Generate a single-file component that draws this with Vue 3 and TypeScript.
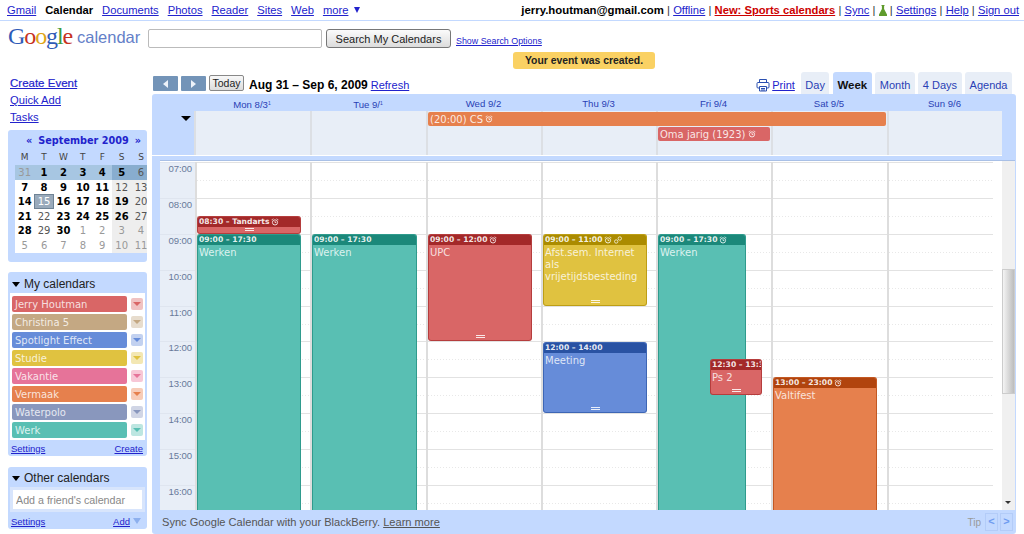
<script setup lang="ts">
interface CalEvent {
  day: number
  start: number
  end: number
  time: string
  title: string
  color: string
  head: string
  left?: number
  width: number
  alarm?: boolean
  repeat?: boolean
  grip?: boolean
}

const HOUR = 35.9
const topNav = ['Gmail', 'Calendar', 'Documents', 'Photos', 'Reader', 'Sites', 'Web']
const views = ['Day', 'Week', 'Month', '4 Days', 'Agenda']
const hours = ['07:00', '08:00', '09:00', '10:00', '11:00', '12:00', '13:00', '14:00', '15:00', '16:00']

const dayHeads = [
  { name: 'Mon 8/3', tail: '1' },
  { name: 'Tue 9/', tail: '1' },
  { name: 'Wed 9/2', tail: '' },
  { name: 'Thu 9/3', tail: '' },
  { name: 'Fri 9/4', tail: '' },
  { name: 'Sat 9/5', tail: '' },
  { name: 'Sun 9/6', tail: '' },
]

const miniWeekdays = ['M', 'T', 'W', 'T', 'F', 'S', 'S']
// each cell is "number:kind"
const miniDays = [
  ['31:o', '1:b', '2:b', '3:b', '4:b', '5:b', '6:'],
  ['7:b', '8:b', '9:b', '10:b', '11:b', '12:', '13:'],
  ['14:b', '15:t', '16:b', '17:b', '18:b', '19:b', '20:'],
  ['21:b', '22:', '23:b', '24:b', '25:b', '26:b', '27:'],
  ['28:b', '29:', '30:b', '1:o', '2:o', '3:o', '4:o'],
  ['5:o', '6:o', '7:o', '8:o', '9:o', '10:o', '11:o'],
].map((week, row) =>
  week.map((cell, col) => {
    const [n, kind] = cell.split(':')
    return { n, kind, row, weekend: col > 4 }
  })
)

const myCalendars = [
  { name: 'Jerry Houtman', color: '#d96666', soft: '#f0c2c2' },
  { name: 'Christina 5', color: '#c4a883', soft: '#e7dccd' },
  { name: 'Spotlight Effect', color: '#668cd9', soft: '#c2d1f0' },
  { name: 'Studie', color: '#e0c240', soft: '#f3e7b3' },
  { name: 'Vakantie', color: '#e67399', soft: '#f7c7d6' },
  { name: 'Vermaak', color: '#e6804d', soft: '#f7ccb8' },
  { name: 'Waterpolo', color: '#8997bd', soft: '#d0d5e5' },
  { name: 'Werk', color: '#59bfb3', soft: '#bde6e1' },
]

const events: CalEvent[] = [
  { day: 0, start: 8.5, end: 9, time: '08:30 – Tandarts', title: '', color: '#d96666', head: '#a32929', width: 104, alarm: true, grip: true },
  { day: 0, start: 9, end: 17.5, time: '09:00 – 17:30', title: 'Werken', color: '#59bfb3', head: '#1b887a', width: 104 },
  { day: 1, start: 9, end: 17.5, time: '09:00 – 17:30', title: 'Werken', color: '#59bfb3', head: '#1b887a', width: 105 },
  { day: 2, start: 9, end: 12, time: '09:00 – 12:00', title: 'UPC', color: '#d96666', head: '#a32929', width: 104, alarm: true, grip: true },
  { day: 3, start: 9, end: 11, time: '09:00 – 11:00', title: 'Afst.sem. Internet als vrijetijdsbesteding', color: '#e0c240', head: '#ab8b00', width: 104, alarm: true, repeat: true, grip: true },
  { day: 3, start: 12, end: 14, time: '12:00 – 14:00', title: 'Meeting', color: '#668cd9', head: '#2952a3', width: 104, grip: true },
  { day: 4, start: 9, end: 17.5, time: '09:00 – 17:30', title: 'Werken', color: '#59bfb3', head: '#1b887a', width: 88, alarm: true },
  { day: 4, start: 12.5, end: 13.5, time: '12:30 – 13:30', title: 'Ps 2', color: '#d96666', head: '#a32929', left: 52, width: 52, grip: true },
  { day: 5, start: 13, end: 23, time: '13:00 – 23:00', title: 'Valtifest', color: '#e6804d', head: '#b1440e', width: 104, alarm: true },
]

function eventsFor(day: number) {
  return events.filter((e) => e.day === day)
}

function eventStyle(e: CalEvent) {
  return {
    top: `${(e.start - 7) * HOUR}px`,
    height: `${(e.end - e.start) * HOUR}px`,
    left: `${e.left ?? 0}px`,
    width: `${e.width}px`,
    background: e.color,
    borderColor: `${e.head}aa`,
  }
}
</script>

<template>
  <div class="page">
    <header class="topbar">
      <nav class="nav">
        <template v-for="item in topNav" :key="item">
          <b v-if="item === 'Calendar'">{{ item }}</b>
          <a v-else href="#">{{ item }}</a>
        </template>
        <span class="more"><a href="#">more</a> <i class="nav-caret"></i></span>
      </nav>
      <div class="account">
        <b>jerry.houtman@gmail.com</b>
        <span class="sep">|</span><a href="#">Offline</a>
        <span class="sep">|</span><a href="#" class="sports">New: Sports calendars</a>
        <span class="sep">|</span><a href="#">Sync</a>
        <span class="sep">|</span>
        <svg class="flask" width="8" height="11" viewBox="0 0 8 11">
          <path d="M2.500 0h3v1h-.4v3L8 9.500V11H0V9.500L2.900 4V1h-.4z" fill="#5f9b2c" />
        </svg>
        <span class="sep">|</span><a href="#">Settings</a>
        <span class="sep">|</span><a href="#">Help</a>
        <span class="sep">|</span><a href="#">Sign out</a>
      </div>
    </header>

    <div class="masthead">
      <div class="logo">
        <span class="g-blue">G</span><span class="g-red">o</span><span class="g-yellow">o</span><span class="g-blue">g</span><span class="g-green">l</span><span class="g-red">e</span>
      </div>
      <div class="logo-word">calendar</div>
      <input class="search" type="text" />
      <button class="search-btn">Search My Calendars</button>
      <a href="#" class="search-options">Show Search Options</a>
    </div>

    <div class="body">
      <aside class="sidebar">
        <div class="actions">
          <a href="#" class="create">Create Event</a>
          <a href="#">Quick Add</a>
          <a href="#">Tasks</a>
        </div>

        <section class="mini">
          <div class="mini-title"><span>«</span>September 2009<span>»</span></div>
          <div class="mini-weekdays">
            <span v-for="(d, i) in miniWeekdays" :key="i">{{ d }}</span>
          </div>
          <div class="mini-grid">
            <template v-for="week in miniDays">
              <span
                v-for="(cell, i) in week"
                :key="`${cell.row}-${i}`"
                class="mini-day"
                :class="[`k-${cell.kind}`, { weekend: cell.weekend, first: cell.row === 0 }]"
              >{{ cell.n }}</span>
            </template>
          </div>
        </section>

        <section class="box my">
          <h3><i class="tri"></i>My calendars</h3>
          <ul class="cal-list">
            <li v-for="c in myCalendars" :key="c.name">
              <span class="cal-name" :style="{ background: c.color }">{{ c.name }}</span>
              <span class="cal-menu" :style="{ background: c.soft }">
                <i :style="{ borderTopColor: c.color }"></i>
              </span>
            </li>
          </ul>
          <div class="box-foot"><a href="#">Settings</a><a href="#">Create</a></div>
        </section>

        <section class="box other">
          <h3><i class="tri"></i>Other calendars</h3>
          <div class="friend-wrap">
            <input class="friend" type="text" placeholder="Add a friend's calendar" />
          </div>
          <div class="box-foot">
            <a href="#">Settings</a>
            <span class="add"><a href="#">Add</a><i></i></span>
          </div>
        </section>
      </aside>

      <main class="main">
        <div class="banner-row"><div class="banner">Your event was created.</div></div>

        <div class="toolbar">
          <button class="arrow"><i class="left"></i></button>
          <button class="arrow"><i class="right"></i></button>
          <button class="today">Today</button>
          <b class="range">Aug 31 – Sep 6, 2009</b>
          <a href="#" class="refresh">Refresh</a>
          <div class="toolbar-right">
            <svg class="print-icon" width="14" height="14" viewBox="0 0 14 14" fill="none" stroke="#2a4fb0">
              <path d="M3.500 4.500V1.500h7v3" />
              <rect x="1" y="4.500" width="12" height="5.500" rx="1" />
              <path d="M3.500 8.500h7v4.500h-7z" fill="#fff" />
              <path d="M5 10.500h4M5 12h4" />
            </svg>
            <a href="#" class="print">Print</a>
            <div class="tabs">
              <span v-for="v in views" :key="v" class="tab" :class="{ active: v === 'Week' }">{{ v }}</span>
            </div>
          </div>
        </div>

        <div class="panel">
          <div class="day-heads">
            <span v-for="d in dayHeads" :key="d.name">{{ d.name }}<small v-if="d.tail">{{ d.tail }}</small></span>
          </div>

          <div class="allday-row">
            <div class="allday-gutter"><i class="tri"></i></div>
            <div class="allday">
              <span v-for="n in 7" :key="n" class="allday-cell" :style="{ gridColumn: n }"></span>
              <div class="chip chip-orange">
                (20:00) CS
                <svg class="alarm" width="8" height="8" viewBox="0 0 8 8"><use href="#alarm-shape" /></svg>
              </div>
              <div class="chip chip-red">
                Oma jarig (1923)
                <svg class="alarm" width="8" height="8" viewBox="0 0 8 8"><use href="#alarm-shape" /></svg>
              </div>
            </div>
          </div>

          <div class="schedule">
            <div class="times">
              <div v-for="h in hours" :key="h" class="time">{{ h }}</div>
            </div>
            <div class="columns">
              <div v-for="(d, day) in dayHeads" :key="d.name" class="column">
                <div v-for="h in hours" :key="h" class="slot"></div>
                <div
                  v-for="e in eventsFor(day)"
                  :key="e.time + e.title"
                  class="event"
                  :style="eventStyle(e)"
                >
                  <div class="event-head" :style="{ background: e.head }">
                    <span class="event-time">{{ e.time }}</span>
                    <svg v-if="e.alarm" class="alarm" width="8" height="8" viewBox="0 0 8 8"><use href="#alarm-shape" /></svg>
                    <svg v-if="e.repeat" class="alarm" width="8" height="8" viewBox="0 0 8 8" fill="none" stroke="#fff" stroke-width=".8">
                      <circle cx="2.200" cy="5.500" r="1.700" />
                      <circle cx="5.800" cy="2.500" r="1.700" />
                    </svg>
                  </div>
                  <div v-if="e.title" class="event-title">{{ e.title }}</div>
                  <div v-if="e.grip" class="grip"></div>
                </div>
              </div>
            </div>
            <div class="scrollbar">
              <div class="thumb"></div>
              <i class="scroll-down"></i>
            </div>
          </div>

          <div class="tipbar">
            <span class="tip-text">Sync Google Calendar with your BlackBerry. <a href="#">Learn more</a></span>
            <div class="tip-nav">
              <span class="tip-label">Tip</span>
              <span class="tip-btn">&lt;</span>
              <span class="tip-btn">&gt;</span>
            </div>
          </div>
        </div>
      </main>
    </div>

    <svg width="0" height="0" class="defs">
      <symbol id="alarm-shape" viewBox="0 0 8 8">
        <circle cx="4" cy="4.400" r="2.600" fill="none" stroke="#fff" stroke-width=".9" />
        <path d="M0.600 2.200 2.200 .6M7.400 2.200 5.800 .6M4 3v1.500h1.300" fill="none" stroke="#fff" stroke-width=".8" />
      </symbol>
    </svg>
  </div>
</template>

<style>
html,
body {
  margin: 0;
  background: #fff;
}
</style>

<style scoped>
.page {
  position: relative;
  width: 1024px;
  height: 534px;
  overflow: hidden;
  font-family: "Liberation Sans", Arial, sans-serif;
  font-size: 11.200px;
  color: #000;
}

a {
  color: #2222cc;
}

.defs {
  position: absolute;
}

/* top strip */
.topbar {
  display: flex;
  justify-content: space-between;
  align-items: center;
  height: 20px;
  padding: 0 5px 0 7px;
  border-bottom: 1px solid #c3d9ff;
}

.nav {
  display: flex;
  align-items: center;
  gap: 9px;
}

.nav-caret {
  display: inline-block;
  margin-left: 2px;
  border: 3.500px solid transparent;
  border-top: 6px solid #2222cc;
  border-bottom: 0;
  vertical-align: 1px;
}

.account {
  display: flex;
  align-items: center;
}

.account b {
  font-size: 11.400px;
}

.account .sep {
  margin: 0 3.200px;
  color: #333;
}

.sports {
  color: #cc0000;
  font-weight: bold;
}

/* logo + search */
.masthead {
  display: flex;
  align-items: flex-start;
  height: 29px;
  padding: 1px 0 0 8px;
}

.logo {
  width: 69px;
  font-family: "Liberation Serif", serif;
  font-size: 24px;
  line-height: 29px;
  letter-spacing: -1.100px;
}

.g-blue { color: #2f5bb7; }
.g-red { color: #c6321f; }
.g-yellow { color: #e0a516; }
.g-green { color: #3f9a3c; }

.logo-word {
  width: 71px;
  font-size: 16.500px;
  line-height: 30px;
  color: #6480c8;
}

.search {
  box-sizing: border-box;
  width: 174px;
  height: 19px;
  margin-top: 7px;
  border: 1px solid #bbb;
  border-radius: 2px;
  padding: 0 3px;
}

.search-btn {
  box-sizing: border-box;
  width: 125px;
  height: 19px;
  margin: 7px 0 0 4px;
  padding: 0;
  border: 1px solid #777;
  border-radius: 3px;
  background: linear-gradient(#fbfbfb, #dcdcdc);
  font: 11px "Liberation Sans", Arial, sans-serif;
  color: #222;
}

.search-options {
  margin: 13px 0 0 5px;
  font-size: 8.900px;
  line-height: 12px;
}

/* two columns below */
.body {
  display: flex;
}

.sidebar {
  width: 139px;
  padding: 25px 0 0 8px;
  margin-right: 5px;
}

.actions {
  display: flex;
  flex-direction: column;
  gap: 3px;
  padding: 0 0 6px 2px;
  line-height: 14px;
}

.create {
  font-size: 11.500px;
  -webkit-text-stroke: 0.2px #2222cc;
}

/* month picker */
.mini {
  box-sizing: border-box;
  height: 132px;
  padding: 5px 0 0 7px;
  overflow: hidden;
  background: #c3d9ff;
  border-radius: 3px;
  font-family: "DejaVu Sans", sans-serif;
  font-size: 10px;
}

.mini-title {
  display: flex;
  justify-content: center;
  gap: 6px;
  padding-left: 5px;
  font-weight: bold;
  line-height: 12px;
  color: #2222cc;
  font-size: 9.700px;
}

.mini-weekdays {
  display: grid;
  grid-template-columns: repeat(7, 19.400px);
  height: 14px;
  margin-top: 3px;
  line-height: 14px;
  text-align: center;
  color: #444;
  font-size: 9px;
}

.mini-grid {
  display: grid;
  grid-template-columns: repeat(7, 19.400px);
  grid-auto-rows: 14.600px;
  margin-top: 1px;
  background: #fff;
  line-height: 16px;
  text-align: center;
  color: #555;
}

.mini-day.weekend {
  background: #eeeeee;
}

.mini-day.first {
  background: #a7c6e2;
}

.mini-day.first.weekend {
  background: #88adcf;
}

.k-b {
  font-weight: bold;
  color: #000;
}

.k-o {
  color: #999;
}

.k-t {
  background: #99aabb;
  color: #fff;
  box-shadow: inset 0 0 0 1px #6f8395;
}

/* calendar lists */
.box {
  margin-top: 10px;
  background: #c3d9ff;
  border-radius: 3px;
}

.box h3 {
  margin: 0;
  height: 21px;
  padding-left: 4px;
  font-weight: normal;
  font-size: 12px;
  line-height: 24px;
  color: #222;
}

.tri {
  display: inline-block;
  margin-right: 4px;
  border: 4.500px solid transparent;
  border-top: 5px solid #000;
  border-bottom: 0;
  vertical-align: 1px;
}

.cal-list {
  list-style: none;
  margin: 0 2px;
  padding: 3px 2px 1px;
  background: #fff;
  height: 147px;
  box-sizing: border-box;
}

.cal-list li {
  display: flex;
  justify-content: space-between;
  height: 18px;
}

.cal-name {
  box-sizing: border-box;
  width: 115px;
  height: 16px;
  padding-left: 3px;
  border-radius: 2px;
  font-family: "DejaVu Sans", sans-serif;
  font-size: 10px;
  line-height: 17px;
  color: rgba(255, 255, 255, 0.8);
}

.cal-menu {
  display: flex;
  align-items: center;
  justify-content: center;
  width: 12px;
  height: 12px;
  margin-top: 2px;
  border-radius: 2px;
}

.cal-menu i {
  border: 4px solid transparent;
  border-top: 4px solid;
  border-bottom: 0;
}

.box-foot {
  display: flex;
  justify-content: space-between;
  align-items: center;
  height: 16px;
  padding: 0 4px 0 3px;
  font-size: 9.500px;
}

.my {
  height: 184px;
}

.other {
  margin-top: 11px;
  height: 62px;
}

.other h3 {
  height: 20px;
  line-height: 22px;
}

.friend-wrap {
  margin: 0 2px;
  padding: 3px;
  background: #d8e5fc;
}

.friend {
  display: block;
  box-sizing: border-box;
  width: 100%;
  height: 19px;
  padding: 0 3px;
  border: 0;
  font: 10.700px "Liberation Sans", Arial, sans-serif;
}

.friend::placeholder {
  color: #888;
}

.other .box-foot {
  height: 18px;
  padding-right: 6px;
}

.add {
  display: flex;
  align-items: center;
  gap: 3px;
}

.add i {
  border: 4px solid transparent;
  border-top: 6px solid #8db0ee;
  border-bottom: 0;
}

/* main column */
.main {
  width: 864px;
}

.banner-row {
  display: flex;
  justify-content: center;
  height: 20px;
  padding-top: 1px;
  box-sizing: border-box;
}

.banner {
  width: 142px;
  height: 17px;
  background: #fad163;
  border-radius: 3px;
  text-align: center;
  font-weight: bold;
  font-size: 10.400px;
  line-height: 17px;
  color: #222;
}

.toolbar {
  display: flex;
  align-items: flex-end;
  height: 23px;
  padding-left: 1px;
}

.arrow {
  display: flex;
  align-items: center;
  justify-content: center;
  width: 25px;
  height: 15px;
  margin: 0 3px 3px 0;
  padding: 0;
  border: 0;
  border-radius: 1px;
  background: #7394b8;
}

.arrow i {
  border: 4px solid transparent;
}

.arrow .left {
  border-left: 0;
  border-right: 5px solid #eef3fa;
}

.arrow .right {
  border-right: 0;
  border-left: 5px solid #eef3fa;
}

.today {
  box-sizing: border-box;
  width: 35px;
  height: 16px;
  margin: 0 5px 3px 0;
  padding: 0;
  border: 1px solid #888;
  border-radius: 2px;
  background: linear-gradient(#f8f8f8, #dcdcdc);
  font: 10.500px "Liberation Sans", Arial, sans-serif;
  color: #222;
}

.range {
  margin-bottom: 2px;
  font-size: 12px;
  line-height: 14px;
}

.refresh {
  margin: 0 0 2px 3px;
  font-size: 11px;
  line-height: 14px;
}

.toolbar-right {
  display: flex;
  align-items: flex-end;
  margin-left: auto;
  padding-right: 4px;
}

.print-icon {
  margin: 0 2px 2px 0;
}

.print {
  margin: 0 6px 2px 0;
  font-size: 11px;
  line-height: 14px;
}

.tabs {
  display: flex;
  gap: 3.500px;
}

.tab {
  height: 22px;
  padding: 0 4.500px;
  background: #e8eef7;
  border-radius: 3px 3px 0 0;
  font-size: 11px;
  line-height: 26px;
  color: #2a3fb5;
}

.tab.active {
  background: #c3d9ff;
  font-size: 11.500px;
  font-weight: bold;
  color: #111;
}

/* week panel */
.panel {
  background: #c3d9ff;
  border-radius: 3px;
  height: 440px;
}

.day-heads {
  display: grid;
  grid-template-columns: 116px 116px 115px 115px 115px 116px 115px;
  height: 17px;
  padding-left: 42px;
  text-align: center;
  font-size: 9.600px;
  line-height: 19px;
  color: #2a3fb5;
}

.day-heads small {
  font-size: 5px;
  vertical-align: 3px;
}

.allday-row {
  display: flex;
  height: 45px;
  margin-right: 14px;
  border-bottom: 1px solid #fff;
  box-sizing: border-box;
}

.allday-gutter {
  width: 42px;
  padding: 5px 0 0 29px;
  box-sizing: border-box;
  line-height: 8px;
}

.allday-gutter .tri {
  margin: 0;
  border-width: 5px;
  border-bottom: 0;
  vertical-align: top;
}

.allday {
  flex: 1;
  display: grid;
  grid-template-columns: 116px 116px 115px 115px 115px 116px 115px;
  grid-template-rows: 16px 15px 13px;
  background: #e8eef7;
}

.allday-cell {
  grid-row: 1 / -1;
  border-left: 2px solid #dcdfe4;
}

.chip {
  z-index: 1;
  display: flex;
  align-items: center;
  gap: 2px;
  height: 14px;
  padding-left: 2px;
  border-radius: 2px;
  font-family: "DejaVu Sans", sans-serif;
  font-size: 10px;
  color: rgba(255, 255, 255, 0.85);
}

.chip-orange {
  grid-column: 3 / span 4;
  grid-row: 1;
  margin: 1px 1px 0 2px;
  background: #e6804d;
}

.chip-red {
  grid-column: 5;
  grid-row: 2;
  margin: 0 1px 0 2px;
  background: #d96666;
}

.schedule {
  display: flex;
  height: 349px;
  margin: 4px 1px 0 8px;
  border-top: 1px solid #a9c0e6;
  background: #fff;
  overflow: hidden;
}

.times {
  flex: none;
  width: 35px;
  margin-top: 1px;
  background: #e8eef7;
}

.time {
  box-sizing: border-box;
  height: 35.900px;
  padding: 0 3px 0 0;
  border-top: 1px solid #dfe5ef;
  text-align: right;
  font-size: 9.600px;
  line-height: 12px;
  letter-spacing: -0.1px;
  color: #687a9a;
}

.columns {
  display: grid;
  grid-template-columns: 115px 116px 115px 115px 115px 116px 106px;
  width: 798px;
}

.column {
  position: relative;
  box-sizing: border-box;
  border-left: 2px solid #dddddd;
  margin-top: 1px;
}

.slot {
  box-sizing: border-box;
  height: 35.900px;
  border-top: 1px solid #e2e2e2;
  background: linear-gradient(to right, #e8e8e8 50%, transparent 50%) 0 17px / 3px 1px repeat-x;
}

.event {
  position: absolute;
  box-sizing: border-box;
  border: 1px solid;
  border-radius: 3px;
  overflow: hidden;
  font-family: "DejaVu Sans", sans-serif;
  color: rgba(255, 255, 255, 0.8);
}

.event-head {
  display: flex;
  align-items: center;
  gap: 2px;
  height: 10px;
  padding-left: 1px;
  white-space: nowrap;
}

.event-time {
  font-size: 7.600px;
  font-weight: bold;
  line-height: 10px;
  color: rgba(255, 255, 255, 0.9);
}

.event-title {
  padding: 2px 1px 0;
  font-size: 10px;
  line-height: 12px;
}

.grip {
  position: absolute;
  left: 50%;
  bottom: 2px;
  width: 9px;
  height: 3px;
  margin-left: -4px;
  border-top: 1px solid #fff;
  border-bottom: 1px solid #fff;
  box-sizing: border-box;
  opacity: 0.85;
}

.alarm {
  flex: none;
  opacity: 0.9;
}

.scrollbar {
  position: relative;
  flex: none;
  width: 13px;
  margin-left: 9px;
  background: #f0f0f0;
}

.thumb {
  height: 125px;
  margin-top: 108px;
  background: linear-gradient(to right, #f4f4f4, #bdbdbd);
  border: 1px solid #ccc;
  box-sizing: border-box;
}

.scroll-down {
  position: absolute;
  left: 3px;
  bottom: 6px;
  border: 3px solid transparent;
  border-top: 3px solid #333;
  border-bottom: 0;
}

.tipbar {
  display: flex;
  justify-content: space-between;
  align-items: center;
  height: 24px;
  padding: 0 3px 0 10px;
  font-size: 11.100px;
  color: #555;
}

.tip-text a {
  color: #555;
}

.tip-nav {
  display: flex;
  align-items: center;
  gap: 2px;
}

.tip-label {
  margin-right: 2px;
  font-size: 10px;
  color: #999;
}

.tip-btn {
  box-sizing: border-box;
  width: 13px;
  height: 18px;
  border: 1px solid #b3ccf8;
  text-align: center;
  line-height: 15px;
  font-weight: bold;
  font-size: 11px;
  color: #6f9cf0;
}
</style>
